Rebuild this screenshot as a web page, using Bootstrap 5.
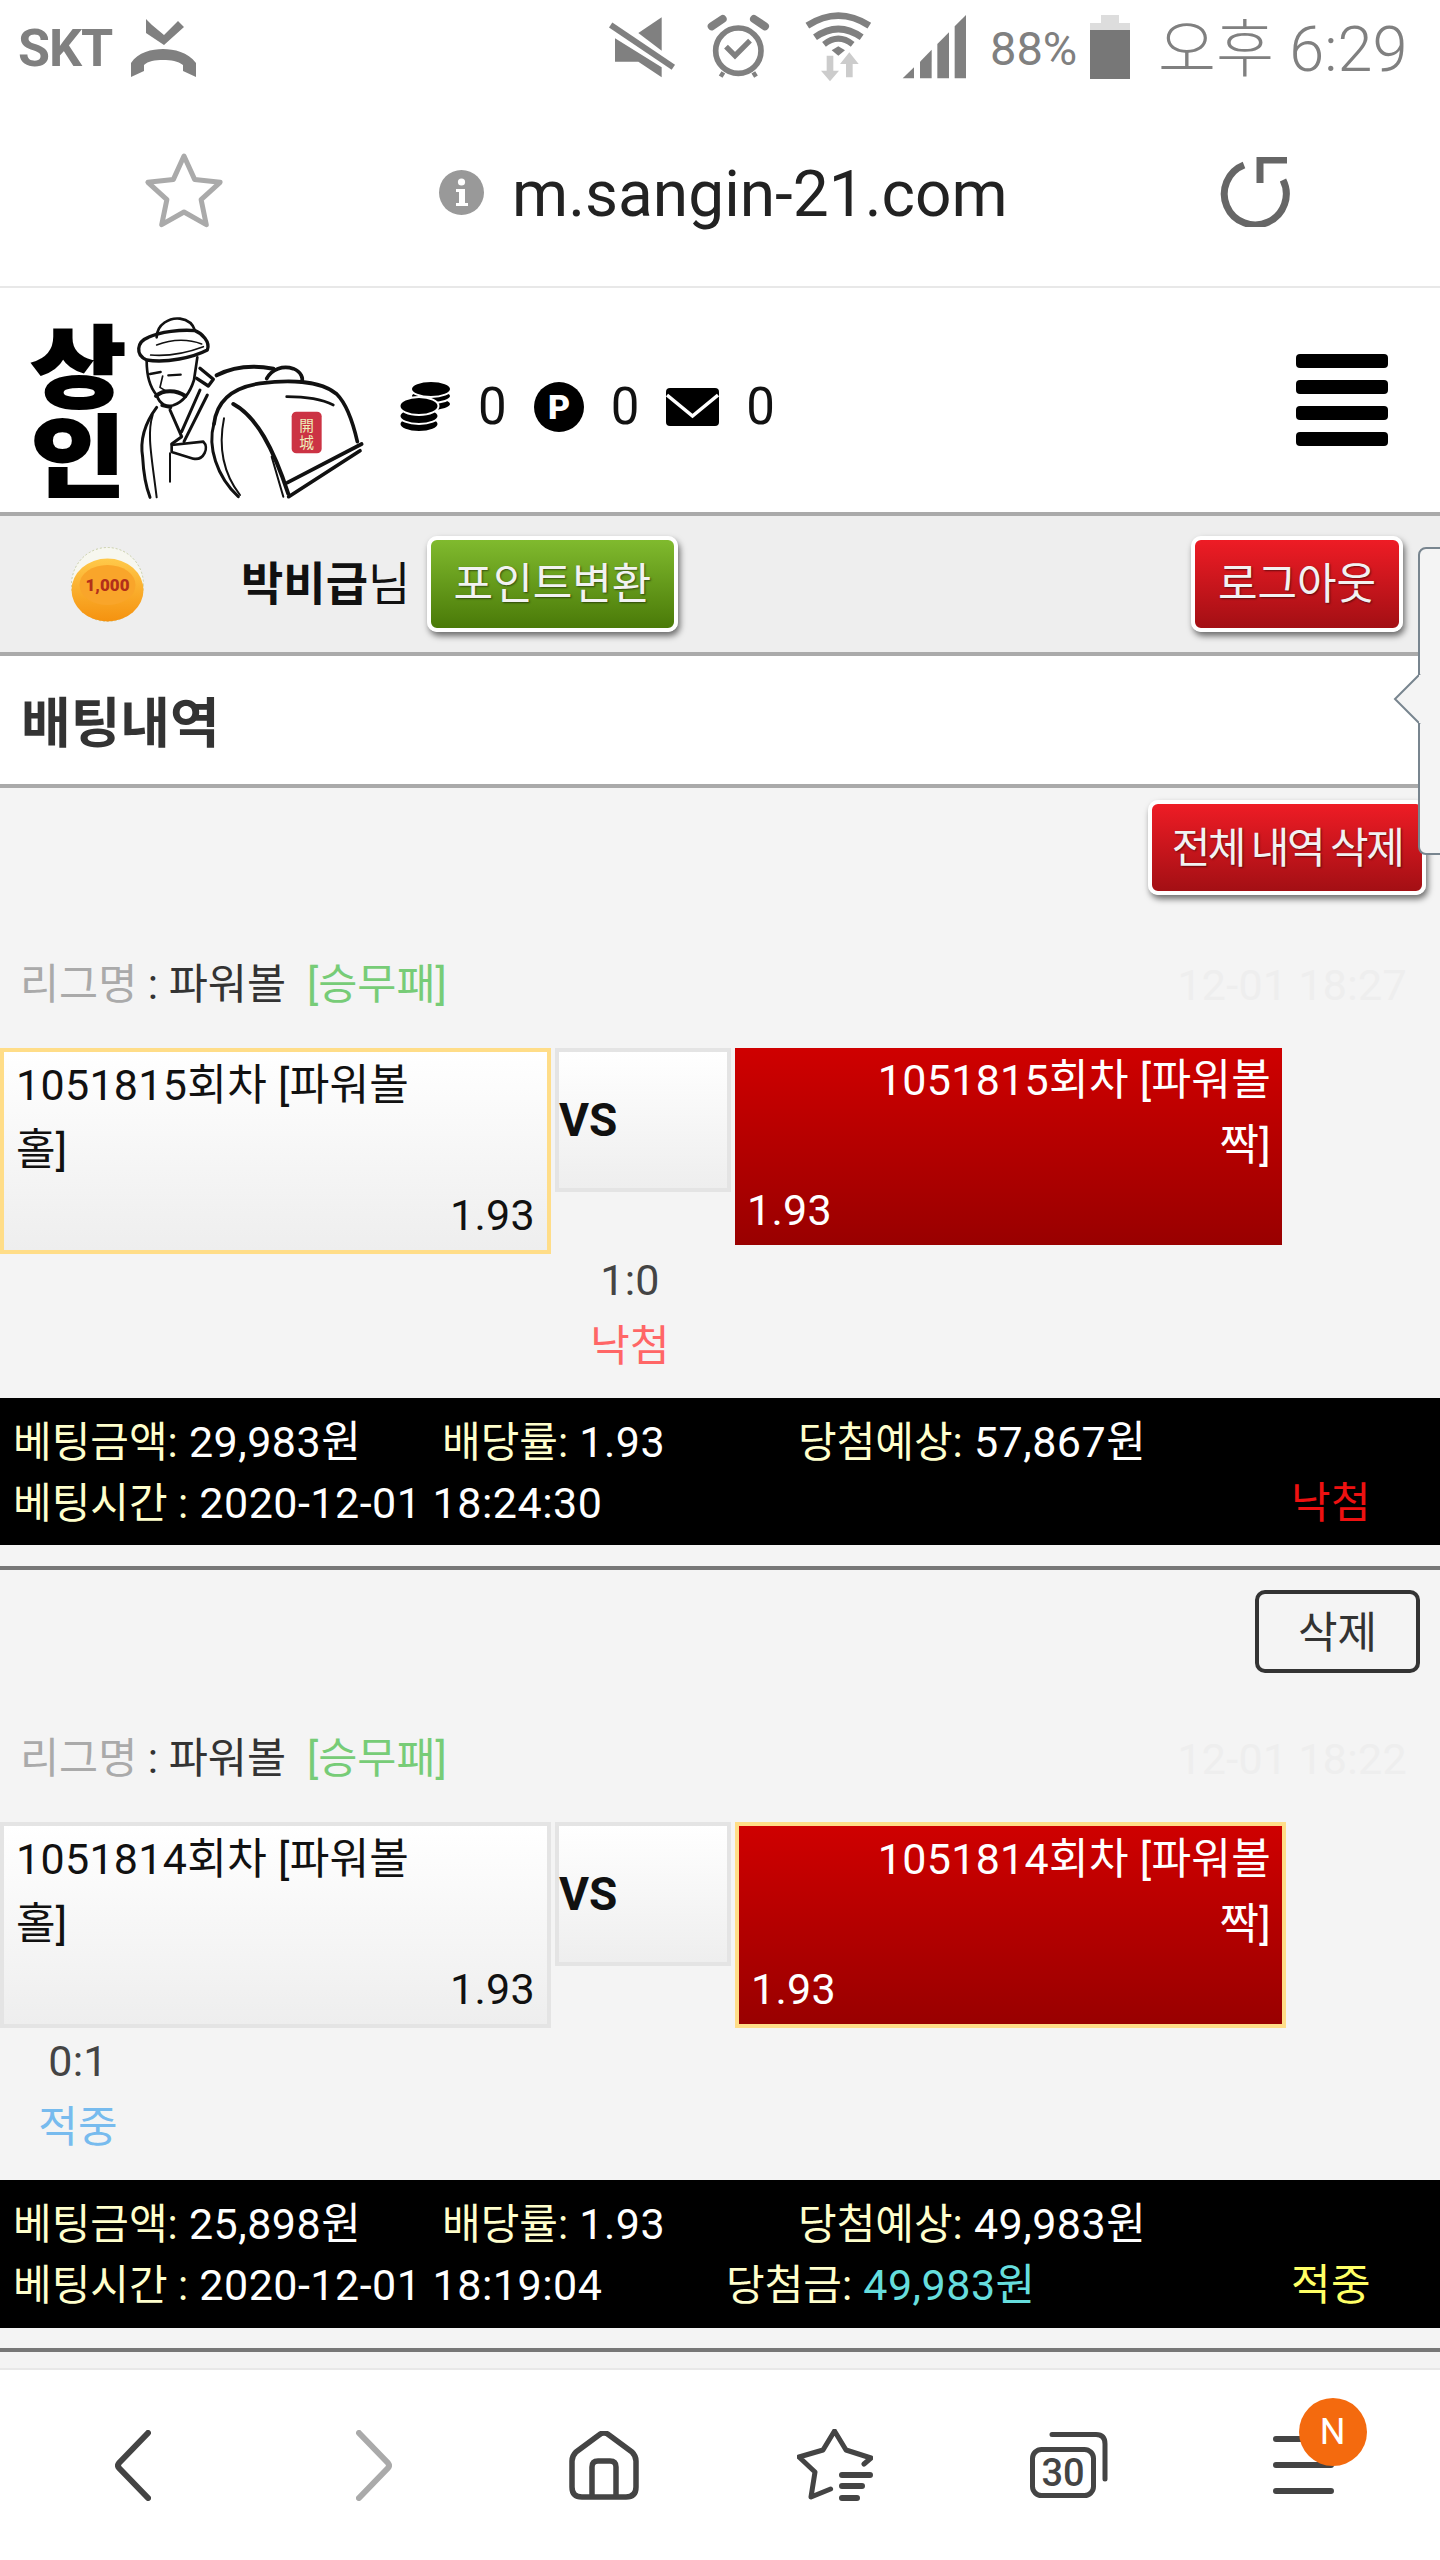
<!DOCTYPE html>
<html lang="ko">
<head>
    <meta charset="UTF-8">
    <meta name="viewport" content="width=device-width, initial-scale=1.0">
    <title>m.sangin-21.com</title>
    <link href="https://cdn.jsdelivr.net/npm/bootstrap@5.3.0/dist/css/bootstrap.min.css" rel="stylesheet">
    <style>
        body {
            font-family: Roboto, "Noto Sans CJK KR", sans-serif;
            font-size: 43px;
            letter-spacing: .3px;
            background: #f4f4f4;
            color: #222;
        }
        .page { width: 1440px; height: 2560px; overflow: hidden; }

        /* phone chrome */
        .status-row { height: 90px; padding-top: 8px; background: #fff; color: #808080; letter-spacing: 0; }
        .skt { font-size: 52px; font-weight: 700; margin-left: 18px; width: 110px; letter-spacing: -1px; }
        .status-icons { margin-left: 392px; }
        .pct { font-size: 47px; width: 100px; }
        .battery { margin-top: -4px; }
        .clock { font-size: 63px; font-weight: 300; margin-left: 28px; margin-top: 2px; width: 260px; white-space: nowrap; }
        .url-row { height: 198px; background: #fff; border-bottom: 2px solid #e8e8e8; padding: 8px 0 0 144px; letter-spacing: 0; }
        .info-icon { margin-left: 215px; }
        .url-text { font-size: 64px; color: #222; margin-left: 28px; margin-top: 5px; }
        .reload-icon { margin-right: 150px; }
        .nav-bottom { height: 192px; background: #fff; border-top: 2px solid #e8e8e8; padding: 0 20px 0 16px; letter-spacing: 0; }
        .nav-cell { width: 234px; }
        .shift-a { margin-left: 5px; }
        .shift-b { margin-left: 14px; }
        .menu-badge {
            left: 26px; top: -38px; width: 68px; height: 68px;
            background: #f46a0e; color: #fff; font-size: 36px;
        }

        /* site header */
        .site-head { height: 224px; background: #fff; letter-spacing: 0; }
        .logo-box { margin-top: 10px; }
        .logo-word { writing-mode: vertical-rl; font-family: "Noto Sans CJK KR", sans-serif; font-weight: 900; font-size: 265px; }
        .stats { margin-left: 19px; margin-top: 14px; gap: 27px; font-size: 51px; color: #111; }
        .burger { width: 92px; margin-right: 52px; gap: 12px; }
        .burger span { display: block; height: 14px; background: #000; border-radius: 4px; }

        .user-bar { height: 144px; background: #eee; border-top: 4px solid #aaa; border-bottom: 4px solid #aaa; letter-spacing: 0; }
        .coin-box { margin-left: 71px; }
        .user-name { font-size: 46px; color: #111; margin-left: 97px; width: 180px; white-space: nowrap; }
        .user-name b { font-weight: 700; }
        .glossy {
            padding: 0; border: 4px solid #fff; border-radius: 10px; color: #f2f2f2; font-size: 43px;
            box-shadow: 2px 4px 6px rgba(0,0,0,.55); text-shadow: 1px 1px 2px rgba(0,0,0,.5);
        }
        .glossy-green { width: 251px; height: 96px; background: linear-gradient(#80ba2e, #4a7a08); margin-left: 6px; }
        .glossy-red { background: linear-gradient(#ee1c25, #a30f14); }
        .glossy-logout { width: 212px; height: 96px; margin-right: 37px; }
        .title-bar { height: 132px; background: #fff; border-bottom: 4px solid #aaa; padding: 10px 0 0 21px; letter-spacing: 0; }
        .title-bar h1 { font-size: 54px; font-weight: 700; color: #333; margin: 0; }

        /* popover at the right edge */
        .side-tip {
            left: 1418px; top: 547px; width: 30px; height: 308px; z-index: 5;
            background: #f4f4f4; border: 2px solid #78858f; border-radius: 8px 0 0 8px;
        }
        .side-tip svg { position: absolute; left: -27px; top: 123px; }

        /* bet rows */
        .bet-top { padding: 12px 14px 0 0; height: 107px; }
        .bet-top-next { padding: 20px 20px 0 0; height: 103px; }
        .glossy-all { width: 278px; height: 95px; padding-top: 2px; font-size: 42px; letter-spacing: -2.5px; word-spacing: -1px; }
        .plain-del {
            width: 165px; height: 83px; padding: 4px 0 0; background: #f4f4f4; color: #333;
            border: 4px solid #333; border-radius: 10px; font-size: 43px;
        }
        .league { height: 64px; line-height: 64px; margin-top: 58px; padding: 0 33px 0 20px; }
        .league-next { margin-top: 54px; }
        .lg-left { font-size: 42.5px; letter-spacing: 0; }
        .lg-label { color: #aaa; }
        .lg-value { color: #333; }
        .lg-type { color: #77cc77; margin-left: 21px; }
        .lg-date { color: #eee; }
        .match { margin-top: 31px; height: 206px; line-height: 65px; color: #111; }
        .pick { width: 551px; height: 206px; padding: 1px 12px 0 12px; border: 4px solid #e4e4e4; background: linear-gradient(#fff, #eee); }
        .pick-on { border-color: #ffdd88; }
        .versus { width: 176px; height: 144px; margin: 0 4px; padding-left: 0; border: 4px solid #e4e4e4; background: linear-gradient(#fff, #eee); font-weight: 700; font-size: 46px; letter-spacing: 0; }
        .away { width: 547px; height: 197px; padding: 0 11px 0 12px; background: linear-gradient(#cf0000, #990000); color: #fff; }
        .away-on { width: 551px; height: 206px; padding: 1px 11px 0 12px; border: 4px solid #ffdd88; }
        .score { line-height: 66px; width: 156px; color: #444; }
        .score-mid { margin-left: 552px; margin-top: -7px; }
        .lost { color: #ff6666; }
        .hit { color: #77bbee; }
        .summary { background: #000; height: 147px; margin-top: 19px; padding: 14px 0 0 13px; color: #fff; line-height: 60px; white-space: nowrap; letter-spacing: .5px; }
        .summary-two { height: 148px; margin-top: 20px; }
        .summary em { font-style: normal; font-size: 42px; letter-spacing: 0; color: #ffffcc; }
        .c-amt { width: 429px; }
        .c-rate { width: 356px; }
        .c-time { width: 713px; }
        .c-win { width: 565px; }
        .prize { color: #66dddd; }
        .res-lost { color: #ee1111; }
        .res-hit { color: #ffff66; }
        .rule { height: 4px; background: #777; margin-top: 21px; }
        .rule-two { margin-top: 20px; }
        .tail { height: 16px; }
    </style>
</head>
<body>
<div class="page position-relative">

    <!-- status bar -->
    <div class="status-row d-flex align-items-center">
        <span class="skt">SKT</span>
        <svg width="70" height="60" viewBox="0 0 70 60" fill="#808080">
            <polygon points="18,0 24,6 36,16 50,2 56,8 36,26 18,14"/>
            <path d="M3 58V44C10 33 24 30 35 30S60 33 68 44V58L55 52V46C50 42 43 41 35 41S20 42 16 46V52Z"/>
        </svg>
        <svg class="status-icons" width="400" height="80" viewBox="0 0 1200 240" fill="#808080">
            <polygon points="145,72 215,25 215,125"/>
            <polygon points="75,88 215,175 215,205 145,158 75,158"/>
            <line x1="62" y1="48" x2="250" y2="175" stroke="#808080" stroke-width="18"/>
            <circle cx="445" cy="125" r="68" fill="none" stroke="#808080" stroke-width="17"/>
            <path d="M365 52L398 30M492 30L525 52" stroke="#808080" stroke-width="24" stroke-linecap="round"/>
            <path d="M400 190L392 203M490 190L498 203" stroke="#808080" stroke-width="13"/>
            <path d="M408 113L435 140L480 95" fill="none" stroke="#808080" stroke-width="16"/>
            <g fill="none" stroke="#808080">
                <path d="M652 50Q745 -10 838 50" stroke-width="20"/>
                <path d="M675 85Q745 35 815 85" stroke-width="20"/>
                <path d="M702 106Q745 72 788 106" stroke-width="18"/>
            </g>
            <polygon points="725,124 745,112 765,124 745,140"/>
            <path d="M710 140H730V185H747L720 217L693 185H710Z" fill="#ccc"/>
            <path d="M768 205V165H750L778 130L806 165H788V205Z" fill="#ccc"/>
            <polygon points="938,208 972,175 972,208"/>
            <polygon points="990,208 990,158 1025,122 1025,208"/>
            <polygon points="1042,208 1042,105 1077,70 1077,208"/>
            <polygon points="1094,208 1094,52 1128,18 1128,208"/>
        </svg>
        <span class="pct">88%</span>
        <svg class="battery" width="40" height="64" viewBox="0 0 40 64">
            <rect x="11" y="0" width="18" height="9" fill="#ddd"/>
            <rect x="0" y="8" width="40" height="8" fill="#ddd"/>
            <rect x="0" y="15" width="40" height="49" fill="#777"/>
        </svg>
        <span class="clock">오후 6:29</span>
    </div>

    <!-- address bar -->
    <div class="url-row d-flex align-items-center">
        <svg width="80" height="80" viewBox="0 0 80 80">
            <polygon points="40,4 50.6,27.4 76.1,30.3 57.1,47.6 62.3,72.7 40,60 17.7,72.7 22.9,47.6 3.9,30.3 29.4,27.4" fill="none" stroke="#aaa" stroke-width="5" stroke-linejoin="round"/>
        </svg>
        <svg class="info-icon" width="45" height="45" viewBox="0 0 45 45">
            <circle cx="22.5" cy="22.5" r="22.5" fill="#999"/>
            <circle cx="22.5" cy="12" r="3.6" fill="#fff"/>
            <path d="M17 19H26V33H29V36H17V33H20V22H17Z" fill="#fff"/>
        </svg>
        <span class="url-text">m.sangin-21.com</span>
        <svg class="reload-icon ms-auto" width="70" height="70" viewBox="0 0 70 70" fill="none" stroke="#666" stroke-width="7">
            <path d="M24 8A31 31 0 1 0 63 23"/>
            <path d="M67 3H40V26"/>
        </svg>
    </div>

    <!-- site header -->
    <div class="site-head d-flex align-items-center">
        <svg class="logo-box" width="380" height="210" viewBox="0 0 1140 630">
            <text class="logo-word" transform="translate(235 68) scale(1.17 1)" stroke="#000" stroke-width="6">상인</text>
            <g fill="none" stroke="#111" stroke-width="8" stroke-linecap="round" stroke-linejoin="round">
                <path d="M470 112C470 72 510 52 540 56C565 60 580 75 585 92"/>
                <path d="M445 112C410 125 405 165 440 180C500 190 580 172 622 150C632 125 605 100 585 92C545 88 480 95 445 112Z" stroke-width="10"/>
                <path d="M470 135C520 115 570 118 605 132M452 165C510 170 570 155 610 140" stroke-width="5"/>
                <path d="M440 182C440 225 450 262 470 285C478 312 500 322 520 316C552 305 572 272 582 240L592 172"/>
                <path d="M450 222L482 216M505 226L542 224" stroke-width="7"/>
                <path d="M488 228L480 262L496 272" stroke-width="5"/>
                <path d="M468 288C490 268 530 270 556 288" stroke-width="12"/>
                <path d="M486 316L512 322" stroke-width="10"/>
                <path d="M600 205L640 238L625 258L590 235" stroke-width="10"/>
                <path d="M600 270L545 395M622 285L552 425M510 330L545 410L515 432" stroke-width="9"/>
                <path d="M470 322C440 362 418 412 428 472C430 512 438 560 450 592" stroke-width="9"/>
                <path d="M458 345C440 400 455 470 470 592" stroke-width="6"/>
                <path d="M515 435L610 425C628 442 612 482 580 476L515 456Z" stroke-width="8"/>
                <path d="M510 460L510 545" stroke-width="6"/>
                <path d="M642 370C622 440 650 530 715 590" stroke-width="9"/>
                <path d="M672 355C655 440 670 520 720 585" stroke-width="6"/>
                <path d="M642 372C650 300 700 262 780 250C860 240 960 240 1010 282C1040 312 1060 372 1072 425" stroke-width="11"/>
                <path d="M700 312C770 350 820 445 865 582" stroke-width="12"/>
                <path d="M650 226C700 200 760 195 820 206" stroke-width="12"/>
                <path d="M800 236C815 206 850 196 880 206C905 216 910 236 905 246" stroke-width="11"/>
                <path d="M860 290C900 290 960 295 1000 315" stroke-width="8"/>
                <path d="M862 548L1085 432M866 590L1080 452" stroke-width="11"/>
                <path d="M815 470L850 590" stroke-width="6"/>
            </g>
            <rect x="875" y="335" width="90" height="125" rx="14" fill="#cc3344"/>
            <text x="920" y="392" text-anchor="middle" font-family="Noto Sans CJK KR" font-size="44" fill="#eeb">開</text>
            <text x="920" y="444" text-anchor="middle" font-family="Noto Sans CJK KR" font-size="44" fill="#eeb">城</text>
        </svg>
        <div class="stats d-flex align-items-center">
            <svg width="52" height="52" viewBox="0 0 52 52">
                <g fill="#000" stroke="#fff" stroke-width="2">
                    <ellipse cx="32" cy="23" rx="20" ry="7"/>
                    <ellipse cx="32" cy="15" rx="20" ry="7"/>
                    <ellipse cx="32" cy="8" rx="20" ry="8"/>
                    <ellipse cx="20" cy="43" rx="19.5" ry="8"/>
                    <ellipse cx="20" cy="35" rx="19.5" ry="8"/>
                    <ellipse cx="20" cy="25" rx="19.5" ry="9"/>
                </g>
            </svg>
            <span>0</span>
            <svg width="50" height="50" viewBox="0 0 50 50">
                <circle cx="25" cy="25" r="25" fill="#000"/>
                <text x="25" y="37" text-anchor="middle" font-family="Roboto" font-weight="900" font-size="34" fill="#fff">P</text>
            </svg>
            <span>0</span>
            <svg width="53" height="38" viewBox="0 0 53 38">
                <rect width="53" height="38" rx="4" fill="#000"/>
                <path d="M1 7L26.5 28L52 7" fill="none" stroke="#fff" stroke-width="3.5"/>
            </svg>
            <span>0</span>
        </div>
        <div class="burger ms-auto d-flex flex-column">
            <span></span><span></span><span></span><span></span>
        </div>
    </div>

    <!-- user bar -->
    <div class="user-bar d-flex align-items-center">
        <svg class="coin-box" width="73" height="75" viewBox="0 0 73 75">
            <defs>
                <linearGradient id="coinFill" x1="0" y1="0" x2="0" y2="1">
                    <stop offset="0" stop-color="#ffc94a"/>
                    <stop offset="1" stop-color="#f5920f"/>
                </linearGradient>
            </defs>
            <ellipse cx="36.5" cy="37.5" rx="36" ry="37" fill="#f7f7ef" stroke="#c9cfa8" stroke-dasharray="2 2"/>
            <ellipse cx="36.5" cy="43" rx="36" ry="31.5" fill="url(#coinFill)"/>
            <ellipse cx="36.5" cy="38" rx="28" ry="20" fill="#f9a52a"/>
            <text x="36.5" y="44" text-anchor="middle" font-family="Roboto" font-weight="900" font-size="17" fill="#b3301a">1,000</text>
        </svg>
        <span class="user-name"><b>박비급</b>님</span>
        <button type="button" class="btn glossy glossy-green">포인트변환</button>
        <button type="button" class="btn glossy glossy-red glossy-logout ms-auto">로그아웃</button>
    </div>

    <div class="title-bar d-flex align-items-center">
        <h1>배팅내역</h1>
    </div>

    <div class="side-tip position-absolute">
        <svg width="30" height="54" viewBox="0 0 30 54">
            <path d="M27 2L2 27L27 52" fill="#f4f4f4" stroke="#78858f" stroke-width="2"/>
            <rect x="26" y="3" width="4" height="48" fill="#f4f4f4"/>
        </svg>
    </div>

    <!-- first bet -->
    <div class="bet-top d-flex justify-content-end">
        <button type="button" class="btn glossy glossy-red glossy-all">전체 내역 삭제</button>
    </div>
    <div class="league d-flex justify-content-between">
        <div class="lg-left"><span class="lg-label">리그명</span><span class="lg-value"> : 파워볼</span><span class="lg-type">[승무패]</span></div>
        <div class="lg-date">12-01 18:27</div>
    </div>
    <div class="match d-flex align-items-start">
        <div class="pick pick-on">
            1051815회차 [파워볼<br>홀]
            <div class="text-end">1.93</div>
        </div>
        <div class="versus d-flex align-items-center">VS</div>
        <div class="away">
            <div class="text-end">1051815회차 [파워볼<br>짝]</div>
            <div>1.93</div>
        </div>
    </div>
    <div class="score score-mid text-center">1:0<br><span class="lost">낙첨</span></div>
    <div class="summary">
        <div class="d-flex"><span class="c-amt"><em>베팅금액:</em> 29,983원</span><span class="c-rate"><em>배당률:</em> 1.93</span><span><em>당첨예상:</em> 57,867원</span></div>
        <div class="d-flex"><span class="c-time"><em>베팅시간 :</em> 2020-12-01 18:24:30</span><span class="c-win"></span><span class="res-lost">낙첨</span></div>
    </div>
    <div class="rule"></div>

    <!-- second bet -->
    <div class="bet-top-next d-flex justify-content-end">
        <button type="button" class="btn plain-del">삭제</button>
    </div>
    <div class="league league-next d-flex justify-content-between">
        <div class="lg-left"><span class="lg-label">리그명</span><span class="lg-value"> : 파워볼</span><span class="lg-type">[승무패]</span></div>
        <div class="lg-date">12-01 18:22</div>
    </div>
    <div class="match d-flex align-items-start">
        <div class="pick">
            1051814회차 [파워볼<br>홀]
            <div class="text-end">1.93</div>
        </div>
        <div class="versus d-flex align-items-center">VS</div>
        <div class="away away-on">
            <div class="text-end">1051814회차 [파워볼<br>짝]</div>
            <div>1.93</div>
        </div>
    </div>
    <div class="score text-center">0:1<br><span class="hit">적중</span></div>
    <div class="summary summary-two">
        <div class="d-flex"><span class="c-amt"><em>베팅금액:</em> 25,898원</span><span class="c-rate"><em>배당률:</em> 1.93</span><span><em>당첨예상:</em> 49,983원</span></div>
        <div class="d-flex"><span class="c-time"><em>베팅시간 :</em> 2020-12-01 18:19:04</span><span class="c-win"><em>당첨금:</em> <span class="prize">49,983원</span></span><span class="res-hit">적중</span></div>
    </div>
    <div class="rule rule-two"></div>
    <div class="tail"></div>

    <!-- browser toolbar -->
    <div class="nav-bottom d-flex align-items-center">
        <div class="nav-cell d-flex justify-content-center">
            <svg width="36" height="71" viewBox="0 0 36 71" fill="none" stroke="#444" stroke-width="6" stroke-linecap="round" stroke-linejoin="round">
                <path d="M33 3L4 33Q2 35.5 4 38L33 68"/>
            </svg>
        </div>
        <div class="nav-cell d-flex justify-content-center">
            <svg class="shift-b" width="36" height="71" viewBox="0 0 36 71" fill="none" stroke="#aaa" stroke-width="6" stroke-linecap="round" stroke-linejoin="round">
                <path d="M3 3L32 33Q34 35.5 32 38L3 68"/>
            </svg>
        </div>
        <div class="nav-cell d-flex justify-content-center">
            <svg class="shift-a" width="70" height="69" viewBox="0 0 70 69" fill="none" stroke="#444" stroke-width="5.5" stroke-linejoin="round">
                <path d="M3 30Q3 25 7 21L30 4Q35 0 40 4L63 21Q67 25 67 30V56Q67 66 57 66H13Q3 66 3 56Z"/>
                <path d="M23 66V36Q23 30 29 30H41Q47 30 47 36V66"/>
            </svg>
        </div>
        <div class="nav-cell d-flex justify-content-center">
            <svg width="76" height="72" viewBox="0 0 76 72" fill="none" stroke="#444" stroke-width="5" stroke-linecap="round" stroke-linejoin="round">
                <path d="M67 35L74 29L49 21L37.5 2L26 21L2 28L18 43L14 68L33.6 60"/>
                <path d="M45 46H73M45 57H65M45 69H60" stroke-width="6"/>
            </svg>
        </div>
        <div class="nav-cell d-flex justify-content-center">
            <svg width="78" height="66" viewBox="0 0 78 66" fill="none" stroke="#444" stroke-width="5" stroke-linecap="round">
                <rect x="2.5" y="17.5" width="61" height="46" rx="9"/>
                <path d="M22 2.5H66Q75 2.5 75 12V47"/>
                <text x="33" y="54" text-anchor="middle" font-family="Roboto" font-weight="500" font-size="38" fill="#444" stroke="none">30</text>
            </svg>
        </div>
        <div class="nav-cell d-flex justify-content-center">
            <div class="position-relative d-flex">
                <svg width="61" height="58" viewBox="0 0 61 58" fill="none" stroke="#444" stroke-width="6" stroke-linecap="round">
                    <path d="M3 3H58M3 29H58M3 55H58"/>
                </svg>
                <span class="menu-badge position-absolute rounded-circle d-flex align-items-center justify-content-center">N</span>
            </div>
        </div>
    </div>
</div>
<script src="https://cdn.jsdelivr.net/npm/bootstrap@5.3.0/dist/js/bootstrap.bundle.min.js"></script>
</body>
</html>
